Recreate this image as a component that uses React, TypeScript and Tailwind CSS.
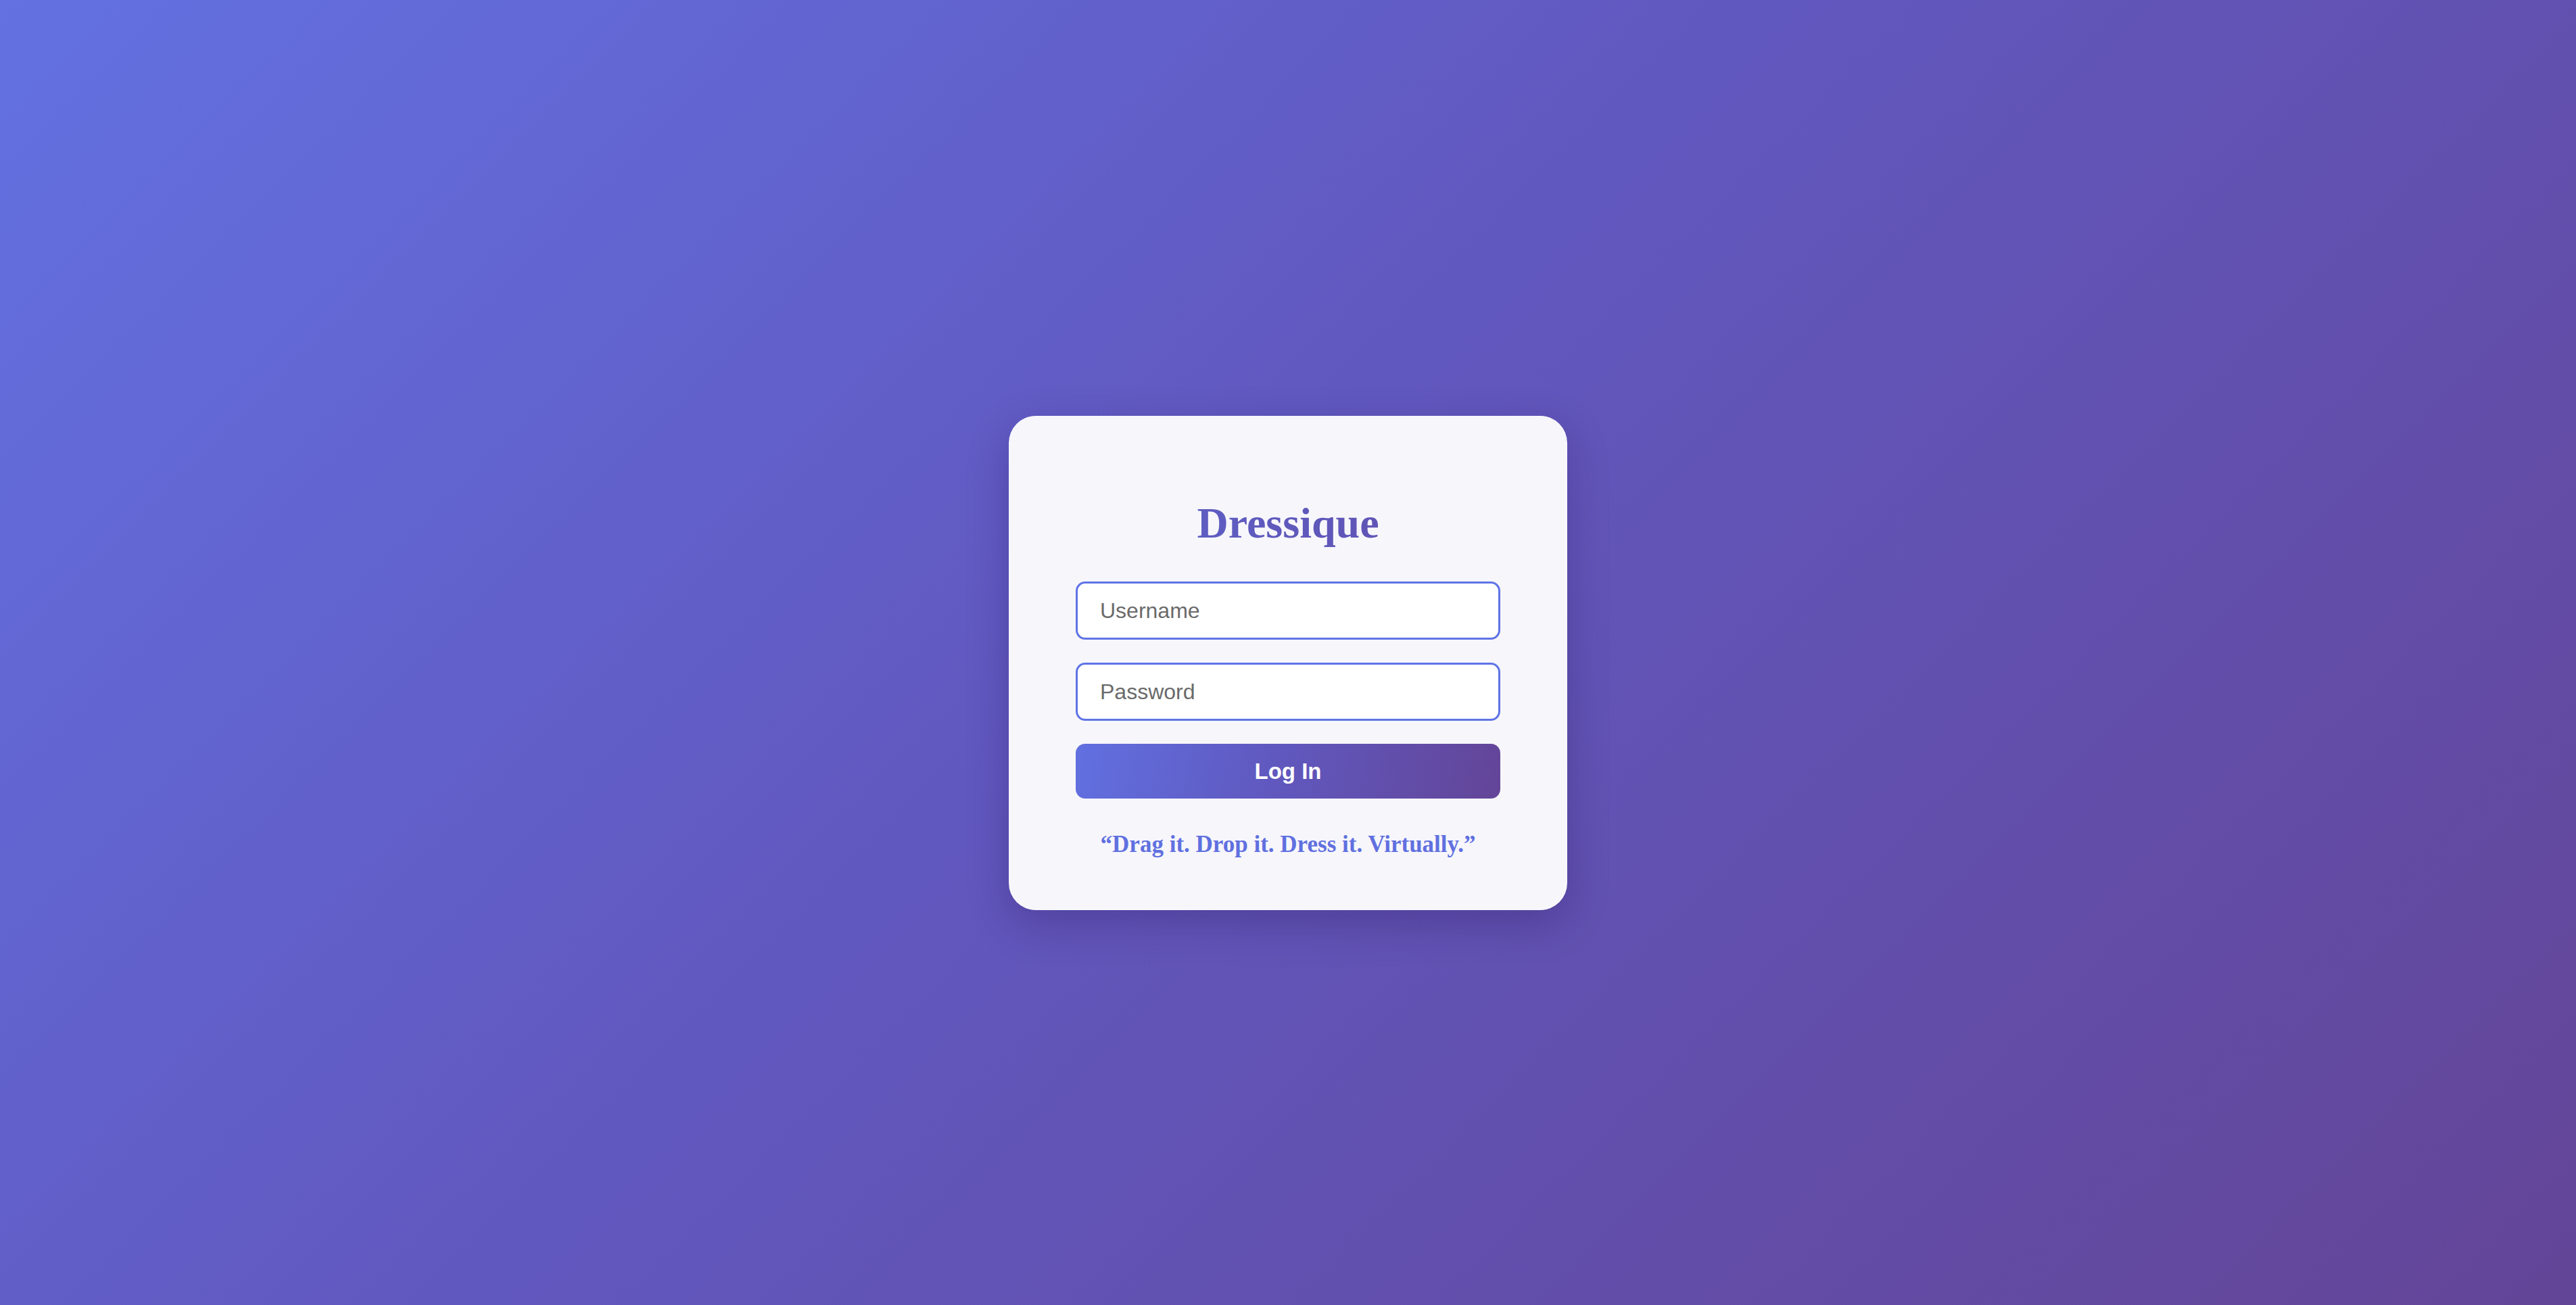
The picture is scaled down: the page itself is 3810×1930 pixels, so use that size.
export default function App() {
  return (
    <div className="min-h-screen w-full flex items-center justify-center pt-[31px] bg-[linear-gradient(135deg,#6371e1_0%,#6158bf_45%,#634597_100%)]">
      {/* ---------------------- LOGIN CARD ---------------------- */}
      <div className="w-[826px] h-[731px] rounded-[40px] bg-[#f7f6fb] shadow-[0_20px_60px_rgba(40,20,90,0.3)] px-[99px] pt-[122px] flex flex-col">
        <h1 className="text-center font-['Liberation_Serif',serif] font-bold text-[64px] leading-[74px] bg-[linear-gradient(90deg,#5d62ca,#614fae)] bg-clip-text text-transparent">
          Dressique
        </h1>

        <form className="mt-[49px] flex flex-col gap-[34px]">
          <input
            type="text"
            placeholder="Username"
            className="h-[86px] w-full rounded-[14px] border-[3px] border-[#5f74e6] bg-white px-[33px] text-[32px] font-['Liberation_Sans',sans-serif] text-[#333] placeholder:text-[#6a6a6a] outline-none"
          />
          <input
            type="password"
            placeholder="Password"
            className="h-[86px] w-full rounded-[14px] border-[3px] border-[#5f74e6] bg-white px-[33px] text-[32px] font-['Liberation_Sans',sans-serif] text-[#333] placeholder:text-[#6a6a6a] outline-none"
          />
          <button
            type="button"
            className="h-[81px] w-full rounded-[14px] bg-[linear-gradient(100deg,#6170e0_0%,#6059c0_45%,#634598_100%)] text-white text-[33px] font-bold font-['Liberation_Sans',sans-serif]"
          >
            Log In
          </button>
        </form>

        <p className="mt-[48px] text-center font-['Liberation_Serif',serif] font-bold text-[35px] leading-[40px] text-[#6070e0]">
          “Drag it. Drop it. Dress it. Virtually.”
        </p>
      </div>
    </div>
  );
}
